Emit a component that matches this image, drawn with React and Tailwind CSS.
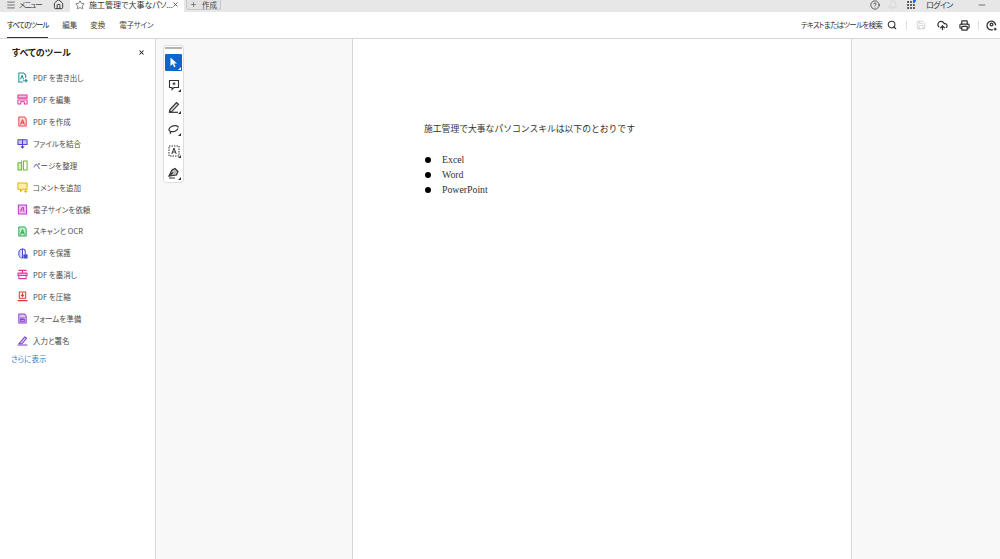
import { Home, Star, X, Plus, Menu, HelpCircle, Bell, Search, Save, CloudUpload, Printer, Grip, Minus } from "lucide-react";

const sans = "font-['Noto_Sans_CJK_JP','Noto_Sans',sans-serif] [font-feature-settings:'palt']";

function ToolIcon({ color, children }) {
  return (
    <svg width="11" height="11" viewBox="0 0 12 12" fill="none" stroke={color} strokeWidth="1.1" strokeLinejoin="round" strokeLinecap="round" className="shrink-0">
      {children}
    </svg>
  );
}

const tools = [
  { label: "PDF を書き出し", color: "#1f8f94", shape: <><path d="M2 11V1h5l2.5 2.5V6" /><path d="M2 11h4" /><path d="M4 7.500l1.500-4 1.500 4" /><path d="M7 9.500h4M9.500 8l1.500 1.500L9.500 11" /></> },
  { label: "PDF を編集", color: "#e0359c", shape: <><rect x="1" y="1" width="10" height="3.500" fill="#f7bfe0" /><path d="M1 6.500h10M1 6.500V11h3V8.500h4V11h3V6.500" /></> },
  { label: "PDF を作成", color: "#e5484d", shape: <><path d="M2 1h6l2 2v8H2z" fill="#fbdcdc" /><path d="M4 9l2-5 2 5M4.800 7.500h2.400" /></> },
  { label: "ファイルを結合", color: "#5145cd", shape: <><path d="M1 2h10v5H1z" fill="#c7c3f5" /><path d="M6 2v5M6 7v4M4.500 9.500L6 11l1.500-1.500" /></> },
  { label: "ページを整理", color: "#6fb52c", shape: <><path d="M1 3h4v8H1z" fill="#d5efb8" /><path d="M7 1h4v10H7z" /><path d="M5 1v1" /></> },
  { label: "コメントを追加", color: "#e3b505", shape: <><path d="M1 1h10v7H6l-2 2.500V8H1z" fill="#fbeeb0" /><path d="M9.500 8.500v3M8 10h3" /></> },
  { label: "電子サインを依頼", color: "#b73cc9", shape: <><path d="M1.500 1h9v10h-9z" fill="#eec4f3" /><path d="M4 8c1-3 2-5 3-4s-2 4 1 4" /></> },
  { label: "スキャンと OCR", color: "#2fa84f", shape: <><path d="M2 1h6l2 2v8H2z" fill="#c9eed3" /><path d="M4 9l2-5 2 5M4.800 7.500h2.400" /></> },
  { label: "PDF を保護", color: "#4b50c8", shape: <><path d="M6 1a4 4 0 0 0-4 4v2a4 4 0 0 0 4 4z" fill="#d6d7f6" /><path d="M6 1a3 3 0 0 1 3 3v2" /><rect x="7.500" y="7.500" width="3.500" height="3.500" fill="#4b50c8" /></> },
  { label: "PDF を墨消し", color: "#e0359c", shape: <><path d="M2 1.500h8M6 1.500v3" /><rect x="1" y="4.500" width="10" height="2.500" fill="#f7bfe0" /><path d="M2 7v3.500h8V7" /></> },
  { label: "PDF を圧縮", color: "#e5343a", shape: <><path d="M2.500 1h7v7h-7z" /><path d="M6 2.500v3M4.500 4.500L6 6l1.500-1.500" /><path d="M1 10.500h10" /></> },
  { label: "フォームを準備", color: "#8b3fd1", shape: <><path d="M2 1h6l2 2v8H2z" fill="#dcc5f4" /><path d="M4 5.500h4M4 5.500V9h4V7H4" /></> },
  { label: "入力と署名", color: "#7c3fc8", shape: <><path d="M1 11h10" /><path d="M2 9.500L8.500 2l2 1.500-5 6z" fill="#dcc5f4" /></> },
];

function ToolRow({ tool }) {
  return (
    <li className="flex h-[21.9px] items-center gap-[5px] pl-[17px]">
      <ToolIcon color={tool.color}>{tool.shape}</ToolIcon>
      <span className="text-[7.500px] leading-none text-[#4b4b4b]">{tool.label}</span>
    </li>
  );
}

function Corner() {
  return <span className="absolute bottom-[1px] right-[1px] h-0 w-0 border-b-[3px] border-l-[3px] border-b-[#333] border-l-transparent"></span>;
}

function QuickButton({ active, children }) {
  return (
    <div className={`relative flex h-[17px] w-[17px] items-center justify-center rounded-[1px] ${active ? "bg-[#0d66d0]" : ""}`}>
      {children}
      {active ? <span className="absolute bottom-[1px] right-[1px] h-0 w-0 border-b-[3px] border-l-[3px] border-b-white border-l-transparent"></span> : <Corner />}
    </div>
  );
}

function QuickTools() {
  return (
    <div className="flex w-[21px] flex-col items-center gap-[5px] rounded-[3px] border border-[#dedede] bg-white px-[1px] pb-[1px] pt-[1px]">
      <div className="h-[2px] w-[17px] bg-[#b4b4b4]"></div>
      <QuickButton active>
        <svg width="9" height="11" viewBox="0 0 9 11"><path d="M1.500 0.500v8.500l2.200-2 1.500 3.200 1.300-.6-1.500-3.100h3z" fill="white" /></svg>
      </QuickButton>
      <QuickButton>
        <svg width="12" height="12" viewBox="0 0 12 12" fill="none" stroke="#333" strokeWidth="1.100"><path d="M1.500 1.500h9v7H6l-2 2v-2H1.500z" /><path d="M6 3.200v3M4.500 4.700h3" /></svg>
      </QuickButton>
      <QuickButton>
        <svg width="12" height="12" viewBox="0 0 12 12" fill="none" stroke="#333" strokeWidth="1.200"><path d="M2 8.500L8.500 1.500l2 1.800L4 10.300l-2.500.5z" fill="#ddd" /><path d="M1 11.300h9" /></svg>
      </QuickButton>
      <QuickButton>
        <svg width="12" height="12" viewBox="0 0 12 12" fill="none" stroke="#333" strokeWidth="1.200"><path d="M10.500 4.500C10 2.500 6.500 2 3.500 3.500S0 8 3 8.500s6-1 7-3M3 8.500c-.8.800-1 1.500-.5 2.500" /></svg>
      </QuickButton>
      <QuickButton>
        <svg width="12" height="12" viewBox="0 0 12 12" fill="none" stroke="#333" strokeWidth="1"><path d="M1 1h10v10H1z" strokeDasharray="1.500 1" /><path d="M3.800 9l2.200-6 2.200 6M4.600 7h2.800" /></svg>
      </QuickButton>
      <QuickButton>
        <svg width="12" height="12" viewBox="0 0 12 12" fill="none" stroke="#333" strokeWidth="1.200"><path d="M1 9l3-6 3-1.500 3 3L8.500 8z" fill="#bbb" /><path d="M1 9l4-3.500M1 11h6" /></svg>
      </QuickButton>
    </div>
  );
}

export default function App() {
  return (
    <div className={`flex h-[559px] w-[1000px] flex-col overflow-hidden bg-white ${sans}`}>
      {/* tab bar, cut off at the top of the window */}
      <div className="flex h-[12px] shrink-0 items-start overflow-hidden bg-[#e7e7e7] text-[7.500px] text-[#444]">
        <div className="flex h-[9px] w-[70px] shrink-0 items-center pl-[6px]">
          <Menu size={10} strokeWidth={1.6} className="text-[#333]" />
          <span className="ml-[3px] w-[34px] leading-[9px] tracking-[-1.2px]">メニュー</span>
          <Home size={11} strokeWidth={2} className="text-[#333]" />
        </div>
        <div className="flex h-[12px] w-[114px] shrink-0 items-start bg-white pl-[5px] text-[#333]">
          <div className="flex h-[9px] items-center">
            <Star size={10} strokeWidth={1.5} />
            <span className="ml-[4px] w-[83px] whitespace-nowrap text-[8px] leading-[9px]">施工管理で大事なパソ...</span>
            <X size={7} strokeWidth={2.5} />
          </div>
        </div>
        <div className="ml-[2px] flex h-[10px] w-[35px] shrink-0 items-center justify-center gap-[5px] rounded-b-[3px] border border-t-0 border-[#c8c8c8] bg-[#e2e2e2]">
          <Plus size={7} strokeWidth={2} />
          <span className="leading-[9px]">作成</span>
        </div>
        <div className="ml-auto flex h-[9px] items-center pr-[13px]">
          <HelpCircle size={10} strokeWidth={1.8} className="text-[#333]" />
          <Bell size={10} strokeWidth={1.3} className="ml-[8px] text-[#c9c9c9]" />
          <div className="relative ml-[8px]">
            <Grip size={10} strokeWidth={2.8} className="text-[#333]" />
            <span className="absolute -top-[1px] right-0 h-[3px] w-[3px] rounded-full bg-[#1473e6]"></span>
          </div>
          <span className="ml-[10px] w-[34px] whitespace-nowrap text-[8px] leading-[9px] tracking-[-0.6px] text-[#333]">ログイン</span>
          <Minus size={10} strokeWidth={1.6} className="ml-[17px] text-[#333]" />
        </div>
      </div>

      {/* second toolbar */}
      <div className="flex h-[27px] shrink-0 items-stretch border-b border-[#d8d8d8] pl-[7px] pr-[3px] text-[7.500px] text-[#444]">
        <div className="flex items-center border-b border-[#333] leading-none tracking-[-1.1px] text-[#222]">すべてのツール</div>
        <div className="ml-[14px] flex items-center leading-none">編集</div>
        <div className="ml-[13px] flex items-center leading-none">変換</div>
        <div className="ml-[14px] flex items-center leading-none tracking-[-0.3px]">電子サイン</div>
        <div className="ml-auto flex items-center text-[#333]">
          <span className="leading-none tracking-[-0.75px]">テキストまたはツールを検索</span>
          <Search size={10} strokeWidth={2.6} className="ml-[5px]" />
          <div className="ml-[9px] h-[9px] w-px bg-[#ddd]"></div>
          <Save size={10} strokeWidth={1.2} className="ml-[9px] text-[#aaa]" />
          <CloudUpload size={11} strokeWidth={2.6} className="ml-[11px]" />
          <Printer size={11} strokeWidth={2.6} className="ml-[11px]" />
          <div className="ml-[8px] h-[9px] w-px bg-[#ddd]"></div>
          <svg width="11" height="11" viewBox="0 0 12 12" fill="none" stroke="#333" strokeWidth="1.400" className="ml-[7px]">
            <path d="M10.500 6A4.700 4.700 0 1 0 6 10.700h1.500" />
            <circle cx="6" cy="5" r="1.500" />
            <path d="M10 8.500v3M8.500 10h3" />
          </svg>
        </div>
      </div>

      <div className="flex min-h-0 flex-1">
        {/* tools panel */}
        <aside className="w-[156px] shrink-0 border-r border-[#d8d8d8] bg-white">
          <div className="flex h-[26px] items-center justify-between pl-[12px] pr-[10px]">
            <span className="text-[9px] font-bold leading-none text-[#222]">すべてのツール</span>
            <X size={7} strokeWidth={3.5} className="text-[#222]" />
          </div>
          <ul className="mt-[2px]">
            {tools.map((tool) => (
              <ToolRow key={tool.label} tool={tool} />
            ))}
          </ul>
          <div className="mt-[1px] pl-[11px] text-[7.500px] leading-[11px] text-[#3a7cc4]">さらに表示</div>
        </aside>

        {/* document area */}
        <main className="flex flex-1 bg-[#f8f8f8]">
          <div className="w-[196px] shrink-0 pl-[7px] pt-[6px]">
            <QuickTools />
          </div>
          <div className="w-[500px] shrink-0 border-x border-[#d8d8d8] bg-white pl-[71px] pt-[84px] font-['Liberation_Serif','Noto_Sans_CJK_JP',serif] text-[#333] [font-feature-settings:normal]">
            <p className="whitespace-nowrap text-[8.800px] leading-[12px]">施工管理で大事なパソコンスキルは以下のとおりです</p>
            <ul className="mt-[17px] text-[9.800px]">
              {["Excel", "Word", "PowerPoint"].map((item) => (
                <li key={item} className="flex h-[15px] items-center">
                  <span className="ml-[1px] h-[6px] w-[6px] rounded-full bg-black"></span>
                  <span className="ml-[11px] leading-none">{item}</span>
                </li>
              ))}
            </ul>
          </div>
        </main>
      </div>
    </div>
  );
}
